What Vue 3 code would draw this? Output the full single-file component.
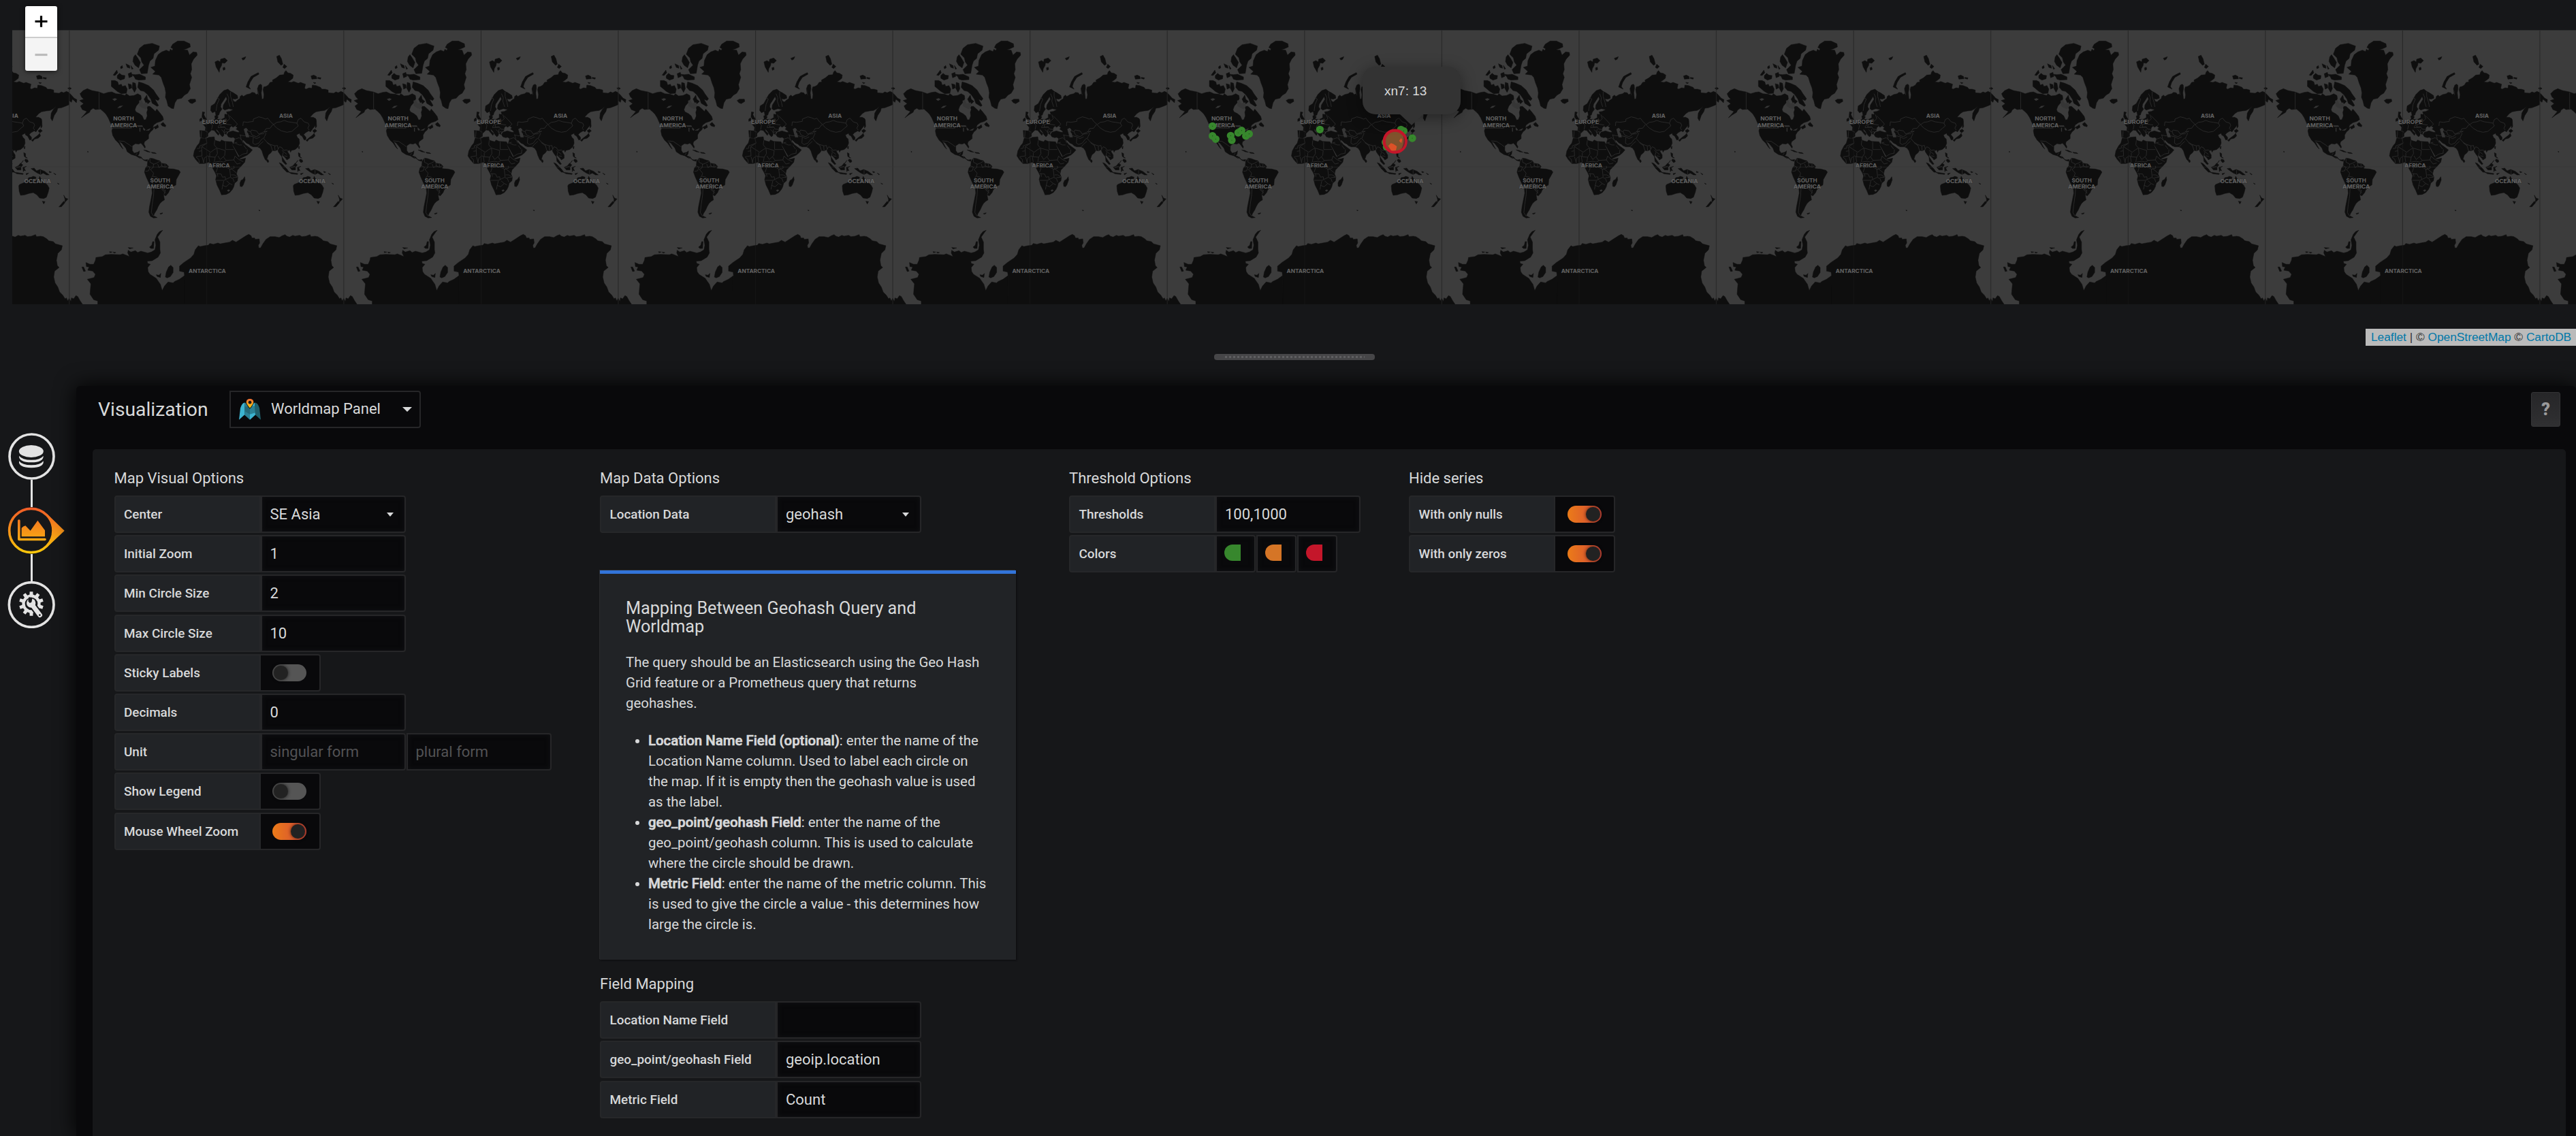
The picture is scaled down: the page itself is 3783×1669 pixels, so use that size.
<script setup>
const PERIOD = 1209.4
const copies = Array.from({ length: 10 }, (_, i) => ({ id: i, x: (i - 1) * PERIOD }))

const land = [
  // Eurasia
  'M164,302 L176,312 188,318 206,330 208,342 196,346 184,344 190,356 198,358 206,350 216,344 218,334 226,328 232,334 246,326 262,322 270,316 282,318 288,326 297,322 294,300 300,284 308,280 313,284 314,300 311,318 314,346 321,344 323,326 319,304 322,292 332,290 342,284 350,272 362,270 360,262 378,252 392,240 410,238 414,226 420,220 428,230 440,232 452,240 450,254 440,262 428,270 444,272 454,268 474,276 484,272 494,276 506,280 502,298 508,302 522,296 534,298 536,284 552,286 572,294 578,302 592,302 606,306 606,318 630,320 640,314 650,318 662,312 672,316 684,328 696,342 708,348 706,362 696,352 688,346 684,360 674,352 674,370 660,376 640,384 624,386 620,400 608,418 600,442 593,430 595,408 604,392 618,376 604,388 590,396 572,398 552,402 540,410 526,426 540,426 550,432 553,446 546,466 538,476 528,490 520,486 506,494 498,502 508,514 508,524 500,526 494,514 490,508 482,504 480,496 466,504 470,514 478,522 480,540 474,556 460,568 444,572 440,580 436,570 426,576 436,592 436,606 424,614 418,606 404,592 402,600 410,612 424,632 418,634 404,620 402,600 394,590 386,578 384,568 372,574 360,572 354,582 342,592 338,604 334,618 328,612 320,594 314,574 306,562 294,556 276,556 264,552 256,544 246,540 232,526 228,530 240,546 248,552 256,558 272,570 262,582 250,592 234,600 216,608 212,600 204,584 196,566 190,556 188,546 192,534 196,520 188,514 178,516 166,512 160,502 166,492 186,486 206,492 216,492 210,484 200,478 206,472 196,464 186,470 180,464 172,472 170,486 160,490 156,502 148,494 146,506 140,512 132,504 124,490 112,476 114,486 126,498 122,506 112,494 104,484 92,482 86,488 76,498 76,510 62,518 42,514 40,484 64,486 66,470 56,458 72,458 84,446 98,440 108,434 106,420 114,418 122,424 116,434 134,436 150,428 150,412 162,414 158,402 172,400 188,392 168,388 150,394 142,388 144,372 154,356 160,346 156,334 146,350 134,368 132,380 138,390 128,404 124,416 112,422 108,400 96,406 88,396 90,376 106,366 118,344 128,326 146,308z',
  'M52,402 L62,404 58,414 64,426 72,438 72,446 54,450 58,436 50,424z M40,434 L48,428 50,440 40,444z',
  // Africa
  'M44,518 L68,520 80,514 104,512 106,526 116,530 130,534 136,526 150,532 182,534 188,546 196,566 204,584 212,602 218,612 242,606 238,624 220,644 206,658 202,676 208,690 206,706 194,716 190,732 184,744 172,758 156,766 136,768 128,748 116,724 110,700 114,684 108,670 98,652 96,634 80,624 60,630 38,630 22,612 12,596 16,574 28,552 38,540z',
  'M238,688 L240,702 232,724 226,732 218,730 217,716 222,704 230,700z',
  // European and Siberian Arctic islands
  'M107,182 L120,176 130,182 132,170 150,165 162,176 150,188 138,186 136,198 128,212 126,228 118,214 112,204z M142,208 l8,-3 2,10 -8,4z M225,166 L243,159 238,170 230,174z',
  'M244,292 L252,270 266,246 284,236 298,229 301,236 276,250 262,272 256,290 264,302z',
  'M379,158 L391,152 400,168 406,192 398,197 384,182z M406,206 L412,192 424,202 414,211z M530,244 L542,240 554,246 556,256 534,258z M560,250 l14,2 -2,6 -12,-3z M540,272 l12,2 -6,4z M668,298 l8,-4 8,5 -8,5z',
  // East Asian islands
  'M548,430 l5,6 2,30 -5,8 -2,-16z M538,484 L548,478 556,486 546,494 540,490z M544,496 L548,508 538,518 522,522 514,532 508,528 522,516 538,504z M476,556 l4,-2 -2,12 -3,-4z M424,590 l4,4 -4,4z',
  'M474,582 L482,586 482,600 490,606 484,604 476,598z M482,610 L492,614 494,622 486,626 478,616z M472,616 l-10,14 8,-10z',
  'M390,626 L400,630 424,654 434,668 424,668 406,650z M432,668 L448,670 472,674 470,678 444,675z M436,646 L450,640 460,628 470,636 462,646 462,658 446,658z M470,646 L486,642 476,650 482,662 476,660 472,666z M506,652 L520,650 530,662 546,656 566,664 586,680 574,680 560,672 548,678 534,672 522,664z M484,674 l12,-2 -10,8z',
  'M336,612 l6,2 2,8 -4,4 -4,-6z M586,664 l10,4 -8,2z M606,672 l10,6 -3,1z M622,716 l8,4 -2,2z',
  // Oceania
  'M452,728 L456,722 476,714 488,706 496,692 508,690 516,686 528,690 526,700 538,708 544,686 552,700 564,712 578,724 586,738 582,756 574,778 562,784 544,782 532,768 516,758 496,762 478,768 460,770 454,752z M556,796 L568,798 562,808z M650,769 L658,782 669,786 660,796 654,800 656,788z M650,796 L656,802 640,820 629,821z',
  // North America
  'M722,322 L736,308 754,300 774,308 804,314 826,322 846,316 862,314 880,322 900,324 920,330 926,322 940,332 960,330 976,322 990,330 992,344 984,360 970,376 964,392 968,402 984,410 996,420 1004,438 1012,436 1018,420 1016,404 1020,392 1016,378 1030,378 1046,392 1054,400 1060,390 1072,404 1086,422 1090,436 1078,444 1060,450 1046,460 1042,472 1058,464 1064,458 1068,470 1054,478 1048,470 1042,482 1032,490 1024,504 1024,520 1006,534 1004,544 1010,556 1008,562 998,548 990,540 980,544 966,542 952,552 952,572 960,584 976,580 984,574 982,588 976,596 990,600 1000,612 1008,614 1020,612 1018,620 1004,616 992,606 984,606 968,596 948,590 930,578 924,562 906,540 894,532 904,552 912,566 904,558 892,540 878,526 866,506 862,486 866,472 854,446 846,428 836,412 826,402 812,390 790,392 780,386 768,394 764,404 744,416 728,428 744,410 752,400 732,392 724,376 738,366 720,352 738,346 728,336z',
  'M1078,456 L1088,448 1100,462 1098,468 1084,464z M1002,570 L1016,572 1032,580 1018,578z M1036,580 L1052,582 1058,586 1040,584z M755,576 l4,2 -3,2z',
  // Canadian Arctic
  'M860,264 L876,264 888,270 892,284 904,280 908,290 922,286 930,302 926,320 904,322 886,312 870,298 860,290z M980,270 L1000,276 1014,282 1024,286 1046,306 1056,322 1072,344 1066,352 1052,346 1068,374 1062,378 1040,364 1034,346 1020,326 1004,312 988,308 976,294z M934,278 L948,282 950,296 938,302z M954,272 l12,4 4,24 -8,16 -10,-18z M1004,346 L1016,328 1020,346 1032,356 1022,366 1012,362z',
  'M974,148 L984,122 1004,106 1040,100 1072,112 1068,130 1048,146 1044,166 1030,178 1024,196 1018,232 992,234 984,216 1004,196 994,182 990,164z M958,160 L966,150 976,164 988,184 980,208 964,196 955,180z M946,236 L966,238 984,236 1010,248 1010,260 980,262 966,258 960,246z M886,242 L896,232 906,240 920,242 918,256 900,262 886,254z M868,240 L884,218 888,230 876,242z M900,204 l8,-6 2,10 -8,4z M924,190 L940,198 942,210 930,206z M934,234 L948,228 952,246 938,252z M946,198 l10,14 -6,2z',
  // Greenland and Iceland
  'M1034,206 L1052,200 1054,176 1066,150 1082,138 1102,130 1116,136 1120,126 1128,132 1132,124 1122,118 1130,104 1152,90 1180,90 1206,102 1208,116 1190,124 1176,128 1196,130 1204,152 1220,138 1236,140 1238,152 1222,170 1212,190 1214,216 1208,234 1214,250 1204,282 1208,300 1196,320 1182,328 1170,342 1150,346 1140,362 1134,388 1124,386 1110,376 1104,352 1098,338 1100,318 1096,296 1088,276 1080,250 1070,240 1042,236 1054,224z M1198,352 L1208,346 1230,346 1232,356 1216,366 1206,362z',
  // South America
  'M1020,620 L1030,606 1044,608 1060,614 1074,618 1080,628 1102,632 1112,642 1108,652 1134,654 1158,660 1164,668 1154,686 1146,700 1144,724 1126,734 1116,748 1112,758 1100,772 1090,768 1094,790 1084,796 1074,806 1066,820 1060,834 1050,850 1046,860 1062,868 1046,870 1032,862 1025,844 1028,820 1034,790 1040,760 1038,736 1026,716 1014,690 1006,668 1010,650 1018,640z M1074,850 l12,-3 -2,4 -8,2z M300,835 l6,1 -3,3z',
  // Antarctica
  'M-27,1252 L-27,1124 -29,1108 -49,1104 -49,1082 -30,1066 0,1046 14,1030 20,1010 34,992 42,996 60,992 78,990 84,982 100,986 120,980 130,984 150,980 172,976 184,968 200,976 222,962 244,948 256,942 266,948 270,958 282,958 284,964 302,962 304,980 298,990 300,1002 308,1002 318,984 332,964 350,952 372,952 390,956 404,948 416,943 424,950 436,954 450,946 460,950 480,946 490,952 508,950 526,943 530,952 548,950 560,952 576,962 584,970 604,974 614,984 644,992 640,1010 624,1026 618,1056 622,1080 630,1088 610,1104 606,1130 612,1156 624,1174 632,1196 646,1210 656,1226 662,1222 668,1236 674,1224 682,1238 684,1222 694,1226 704,1212 712,1216 722,1234 734,1252z',
  'M800,1252 L800,1236 782,1230 766,1206 768,1180 770,1160 754,1140 770,1136 784,1132 790,1118 778,1104 756,1100 762,1086 750,1084 748,1066 766,1074 782,1074 790,1056 792,1044 820,1040 834,1032 860,1030 900,1032 910,1028 926,1034 940,1040 932,1024 934,1012 946,1020 966,1014 976,1022 990,1016 1020,1024 1036,1020 1052,1010 1056,990 1052,966 1062,942 1072,930 1086,924 1078,934 1064,954 1074,976 1074,1008 1076,1024 1066,1042 1040,1058 1018,1060 1020,1070 1032,1074 1020,1088 1022,1106 1030,1118 1058,1136 1066,1148 1076,1162 1084,1190 1094,1170 1110,1152 1132,1156 1138,1150 1160,1140 1182,1124 1184,1252z',
  'M1098,1130 L1102,1108 1112,1086 1122,1078 1132,1088 1132,1110 1120,1128 1106,1134z M1058,1120 L1070,1122 1078,1114 1076,1132 1062,1128z M730,1086 L738,1086 746,1104 738,1106z M1028,998 L1038,990 1042,974 1048,974 1046,1004 1034,1004z M934,1000 L956,1002 940,1006z M852,1018 l12,2 -10,3z M868,1020 l12,2 -8,3z',
]

const water = [
  'M234,478 L244,472 252,480 248,490 254,498 258,514 244,514 240,500z',
  'M864,346 L876,342 886,346 874,354z M886,386 L896,376 912,374 900,384z M320,490 L338,486 336,490z',
  'M972,462 L996,462 1000,468 978,468z M984,472 L988,472 988,490 984,488z M1000,470 L1010,480 1006,486 1000,480z M1010,484 L1034,474 1026,484z',
  'M982,352 L992,350 1000,366 1018,360 1020,380 1010,390 996,384 984,376z M182,544 L190,556 214,598 210,600 198,576z M160,748 l8,-4 6,4 -8,6z',
  'M296,300 l4,30 -2,-4z',
]

const borders = [
  'M230,464 L232,446 250,448 276,444 276,434 300,424 316,428 330,434 340,430 352,446 366,458 380,448 396,446 412,440 430,446 446,448 468,452 474,436 486,430 500,446 518,452 522,462 516,474 522,482',
  'M364,458 L380,474 400,486 424,492 446,488 462,474 474,464 468,452 M362,458 L350,474 332,476 324,490 300,500 290,486 268,482 264,490 240,480 M324,490 L332,498 326,510 322,520 336,536 352,546 372,552 382,550 386,568',
  'M264,490 L270,504 290,512 306,500 324,498 M250,506 L276,512 290,520 306,512 M218,502 L222,520 232,540 M250,506 L238,508 216,504 M276,514 L274,540 284,546 M284,546 L300,540 312,524 320,518 M296,556 L304,546 320,532 M352,546 L360,572 M336,538 L352,550 M370,552 L372,574 M384,568 L392,556 402,560 410,572 424,570 432,576 M402,572 L412,580 424,590 M408,580 L404,598 M412,596 L426,598',
  'M205,536 L190,540 M196,522 L214,516 224,526 M196,540 L214,548 226,548 M214,598 L230,588 250,584 M250,568 L248,584 M234,550 L246,566',
  'M114,338 L126,346 116,370 112,398 M160,322 L168,340 166,356 174,380 M176,314 L176,334 184,360 188,380 M130,432 L132,452 120,470 M84,446 L96,462 92,480 M154,430 L160,442 154,456 134,456 M166,414 L172,432 160,444 M172,420 L192,440 206,456 196,466 M154,456 L180,460 M120,472 L150,468 156,478 172,480 M64,486 L76,492 M48,486 L46,514 M134,456 L132,470 150,470 M136,480 L150,494 M150,478 L146,494 160,488',
  'M68,522 L72,540 40,552 40,562 28,564 M72,540 L48,556 50,596 24,600 M50,556 L88,580 104,568 116,562 152,572 M106,528 L104,548 116,562 M154,534 L154,568 190,568 M152,572 L150,594 144,600 156,616 190,614 196,596 M116,564 L118,586 108,602 84,600 84,582 M84,600 L74,596 60,606 56,626 M108,602 L104,622 96,630 M120,596 L130,612 144,600 M106,624 L130,620 146,624 158,616 M24,602 L36,612 38,628 M50,600 L58,628 M70,600 L70,626 M80,600 L84,624 M98,642 L120,642 132,626 M120,644 L112,668 M112,674 L134,676 140,690 152,688 154,700 176,690 172,654 158,646 134,644 M176,650 L202,672 M172,656 L192,650 190,640 M190,614 L204,632 220,628 M196,598 L212,612 232,622 M112,704 L146,704 156,700 M146,706 L140,732 138,744 M140,726 L156,732 172,718 158,706 M172,718 L184,724 M176,692 L186,696 192,712 M186,692 L206,690',
  'M806,316 L806,390 M862,474 L950,474 M892,530 L916,532 940,548 950,556 M968,592 L974,584 M984,604 L990,598 M1030,606 L1030,624 1046,632 1044,648 1032,656 1046,672 1042,686 1060,690 1070,700 1072,716 1086,720 1090,734 1082,744 1100,760 M1044,634 L1060,628 1074,620 M1064,632 L1070,648 1080,640 1098,646 1106,640 M1080,628 L1084,644 M1096,632 L1096,646 M1018,640 L1030,646 1024,662 1010,664 M1040,686 L1034,700 1044,724 1056,740 1076,736 M1048,736 L1046,770 1040,810 1036,846 1046,862 M1086,744 L1098,748 1092,766',
  'M548,658 L548,678 M442,648 L460,642 M36,576 L48,574 M208,690 L192,680 178,680 M120,688 L118,674',
]

const labels = [
  { t: 'NORTH', x: 914, y: 441, w: 91 },
  { t: 'AMERICA', x: 914, y: 469, w: 119 },
  { t: 'SOUTH', x: 1075, y: 712, w: 88 },
  { t: 'AMERICA', x: 1075, y: 741, w: 121 },
  { t: 'EUROPE', x: 104, y: 455, w: 107 },
  { t: 'ASIA', x: 420, y: 427, w: 60 },
  { t: 'AFRICA', x: 125, y: 648, w: 95 },
  { t: 'OCEANIA', x: 535, y: 717, w: 118 },
  { t: 'ANTARCTICA', x: 73, y: 1113, w: 164 },
]

const markers = [
  [242, 465], [242, 508], [256, 522], [322, 507], [327, 527], [355, 494], [370, 484],
  [389, 508], [403, 499], [715, 480], [1072, 480], [1084, 486], [1122, 518], [1004, 536], [1009, 556],
]

const visual = [
  { label: 'Center', value: 'SE Asia', select: true },
  { label: 'Initial Zoom', value: '1' },
  { label: 'Min Circle Size', value: '2' },
  { label: 'Max Circle Size', value: '10' },
  { label: 'Sticky Labels', toggle: true, on: false },
  { label: 'Decimals', value: '0' },
  { label: 'Unit', placeholders: ['singular form', 'plural form'] },
  { label: 'Show Legend', toggle: true, on: false },
  { label: 'Mouse Wheel Zoom', toggle: true, on: true },
]
const mapping = [
  { label: 'Location Name Field', value: '' },
  { label: 'geo_point/geohash Field', value: 'geoip.location' },
  { label: 'Metric Field', value: 'Count' },
]
const hide = ['With only nulls', 'With only zeros']
const colors = ['#37872d', '#d57526', '#c4162a']

const gear = (() => {
  const n = 10
  const pts = []
  for (let i = 0; i < n; i++) {
    const a = (i / n) * Math.PI * 2 - Math.PI / 2
    for (const [d, r] of [[-0.19, 41], [-0.13, 54], [0.13, 54], [0.19, 41]]) {
      pts.push(`${(138 + r * Math.cos(a + d)).toFixed(1)},${(99 + r * Math.sin(a + d)).toFixed(1)}`)
    }
  }
  return `M${pts.join('L')}z`
})()
</script>

<template>
  <div class="page">
    <section class="preview">
      <div class="map">
        <svg class="tiles" viewBox="-786 41 11295 1209.4" preserveAspectRatio="none">
          <defs>
            <g id="world">
              <path v-for="(d, i) in land" :key="'l' + i" :d="d" class="land" />
              <path v-for="(d, i) in borders" :key="'b' + i" :d="d" class="border" />
              <path v-for="(d, i) in water" :key="'w' + i" :d="d" class="water" />
              <path d="M70,41V1250" class="meridian" />
              <path d="M674.5,41V1250" class="antimeridian" />
              <text
                v-for="(l, i) in labels"
                :key="'t' + i"
                :x="l.x"
                :y="l.y"
                :textLength="l.w"
                lengthAdjust="spacingAndGlyphs"
                class="continent"
              >{{ l.t }}</text>
            </g>
            <clipPath id="red-clip"><circle cx="1046" cy="532" r="44" /></clipPath>
          </defs>
          <use v-for="c in copies" :key="c.id" href="#world" :x="c.x" />
          <path d="M-786,645H10509" class="equator" />
          <path d="M-786,42H10509" class="top-edge" />
          <g transform="translate(4260 0)">
            <g v-for="(m, i) in markers" :key="'m' + i">
              <circle :cx="m[0]" :cy="m[1]" r="10" class="dot" />
              <circle :cx="m[0]" :cy="m[1]" r="1.8" class="dot-core" />
            </g>
            <circle cx="1046" cy="532" r="48" class="hot" />
            <g clip-path="url(#red-clip)">
              <path d="M1078,488 Q1094,532 1070,574 L1100,570 1100,500z" fill="#6d2a30" />
              <path d="M1016,552 L1028,540 1040,544 1054,554 1050,572 1030,574z M1064,530 L1072,518 1078,524 1074,540z" fill="#dc5127" />
            </g>
          </g>
        </svg>
        <div class="popup"><span>xn7: 13</span></div>
        <div class="zoom">
          <button><svg viewBox="0 0 20 20"><path d="M0.5,10H19.5M10,1.2V18.8" /></svg></button>
          <button class="off"><svg viewBox="0 0 20 20"><path d="M0.5,10H19.5" /></svg></button>
        </div>
        <div class="attribution"><a>Leaflet</a> | © <a>OpenStreetMap</a> © <a>CartoDB</a></div>
      </div>
      <div class="resizer"><i></i></div>
    </section>

    <section class="editor">
      <nav class="tabs">
        <svg viewBox="0 0 300 207">
          <circle cx="139.500" cy="103.500" r="97.500" class="ring" />
          <ellipse cx="137.500" cy="81" rx="54" ry="27" fill="#e3e3e3" />
          <path d="M84,101 Q98,119 138,119 Q178,119 191,101 Q193,129 138,130 Q82,129 84,101z" fill="#e3e3e3" />
          <path d="M84,124 Q98,142 138,142 Q178,142 191,124 Q195,153 138,154 Q80,153 84,124z" fill="#e3e3e3" />
        </svg>
        <span class="link"></span>
        <svg viewBox="0 0 300 207">
          <defs>
            <linearGradient id="sun" x1="0" y1="0" x2="0" y2="207" gradientUnits="userSpaceOnUse">
              <stop offset="0" stop-color="#f05a28" />
              <stop offset="1" stop-color="#fbca0a" />
            </linearGradient>
          </defs>
          <path d="M205,28 L284,104 205,179 Q232,150 232,104 Q232,58 205,28z" fill="url(#sun)" />
          <circle cx="137.500" cy="103.500" r="96.500" fill="none" stroke="url(#sun)" stroke-width="11" />
          <path d="M78,60 a5.500,5.500 0 0 1 11,0 V137 H198 a5.500,5.500 0 0 1 0,11 H84 q-6,0 -6,-6z" fill="url(#sun)" />
          <path d="M95,130 V92 Q102,84 112,82 L134,104 166,59 198,103 V130z" fill="url(#sun)" />
        </svg>
        <span class="link"></span>
        <svg viewBox="0 0 300 207">
          <circle cx="138.500" cy="103.500" r="98.500" class="ring" />
          <path :d="gear" fill="#e3e3e3" />
          <circle cx="138" cy="99" r="28" fill="#161719" />
          <path d="M142,104 L177,151" stroke="#161719" stroke-width="32" stroke-linecap="round" />
          <path d="M142,104 L176,149" stroke="#e3e3e3" stroke-width="20" stroke-linecap="round" />
          <circle cx="137" cy="96" r="20" fill="#e3e3e3" />
          <path d="M127,70 L143,72 139,92 131,96 124,88z" fill="#161719" />
          <circle cx="175" cy="149" r="4" fill="#161719" />
        </svg>
      </nav>

      <div class="panel">
        <header>
          <h1>Visualization</h1>
          <div class="picker">
            <svg class="logo" viewBox="0 0 96 92">
              <path d="M0,92 L6,40 Q14,16 26,16 L24,70z" fill="#3cb4d0" />
              <path d="M26,16 L36,22 48,40 48,92 24,70z" fill="#2a7f93" />
              <path d="M48,40 L60,22 70,16 72,70 48,92z" fill="#3cb4d0" />
              <path d="M70,16 Q84,18 90,40 L96,92 72,70z" fill="#1f5f6b" />
              <path d="M26,34 L70,30 72,60 48,68 28,56z" fill="#1d5763" opacity=".55" />
              <path d="M48,44 Q30,24 30,14 A18,17 0 0 1 66,14 Q66,24 48,44z" fill="#09090b" />
              <path d="M48,40 Q32,22 32,14 A16,15 0 0 1 64,14 Q64,22 48,40z" fill="url(#pin)" />
              <circle cx="48" cy="15" r="7" fill="#1a1a1c" />
              <defs>
                <linearGradient id="pin" x1="0" y1="0" x2="0" y2="1">
                  <stop offset="0" stop-color="#ee6a38" />
                  <stop offset="1" stop-color="#fcd00b" />
                </linearGradient>
              </defs>
            </svg>
            <span>Worldmap Panel</span>
            <i class="caret big"></i>
          </div>
          <button class="help">?</button>
        </header>

        <div class="content">
          <div class="col c1">
            <h5>Map Visual Options</h5>
            <div v-for="r in visual" :key="r.label" class="row">
              <label>{{ r.label }}</label>
              <div v-if="r.toggle" class="switch"><b :class="{ on: r.on }"></b></div>
              <template v-else-if="r.placeholders">
                <div v-for="p in r.placeholders" :key="p" class="input ghost">{{ p }}</div>
              </template>
              <div v-else class="input">{{ r.value }}<i v-if="r.select" class="caret"></i></div>
            </div>
          </div>

          <div class="col c2">
            <h5>Map Data Options</h5>
            <div class="row">
              <label>Location Data</label>
              <div class="input">geohash<i class="caret"></i></div>
            </div>
            <div class="info">
              <h4>Mapping Between Geohash Query and Worldmap</h4>
              <p>The query should be an Elasticsearch using the Geo Hash Grid feature or a Prometheus query that returns geohashes.</p>
              <ul>
                <li><strong>Location Name Field (optional)</strong>: enter the name of the Location Name column. Used to label each circle on the map. If it is empty then the geohash value is used as the label.</li>
                <li><strong>geo_point/geohash Field</strong>: enter the name of the geo_point/geohash column. This is used to calculate where the circle should be drawn.</li>
                <li><strong>Metric Field</strong>: enter the name of the metric column. This is used to give the circle a value - this determines how large the circle is.</li>
              </ul>
            </div>
            <h5 class="second">Field Mapping</h5>
            <div v-for="r in mapping" :key="r.label" class="row">
              <label>{{ r.label }}</label>
              <div class="input">{{ r.value }}</div>
            </div>
          </div>

          <div class="col c3">
            <h5>Threshold Options</h5>
            <div class="row">
              <label>Thresholds</label>
              <div class="input">100,1000</div>
            </div>
            <div class="row">
              <label>Colors</label>
              <div v-for="c in colors" :key="c" class="input swatch"><s :style="{ background: c }"></s></div>
            </div>
          </div>

          <div class="col c4">
            <h5>Hide series</h5>
            <div v-for="h in hide" :key="h" class="row">
              <label>{{ h }}</label>
              <div class="switch"><b class="on"></b></div>
            </div>
          </div>
        </div>
      </div>
    </section>
  </div>
</template>

<style>
html, body { margin: 0; background: #161719; overflow: hidden; }
</style>

<style scoped>
* { box-sizing: border-box; }
.page {
  width: 3783px; height: 1669px; overflow: hidden;
  display: flex; flex-direction: column;
  background: #161719; color: #d8d9da;
  font-family: Roboto, "Liberation Sans", sans-serif;
}
.preview { height: 567px; flex: none; }
.map { position: relative; height: 508px; padding: 43.5px 0 0 18px; }
.tiles { display: block; width: 3765px; height: 403.1px; background: #3c3c3c; overflow: hidden; }
.land { fill: #0e0e0e; stroke: #0e0e0e; stroke-width: 1.5; stroke-linejoin: round; }
.border { fill: none; stroke: #303030; stroke-width: 2.4; stroke-linejoin: round; }
.water { fill: #363636; }
.meridian { stroke: #1c1c1c; stroke-width: 2.4; opacity: .8; }
.antimeridian { stroke: #262626; stroke-width: 4; opacity: .7; }
.equator { stroke: #363636; stroke-width: 2; opacity: .7; }
.top-edge { stroke: #2b2c2d; stroke-width: 3; }
.continent {
  font-family: Inter, "Open Sans", sans-serif; font-weight: 700; font-size: 24px;
  fill: #626262; text-anchor: middle;
  paint-order: stroke; stroke: rgba(24, 24, 24, .35); stroke-width: 3;
}
.dot { fill: #37872d; stroke: #37872d; stroke-width: 14; }
.dot-core { fill: #1e4a1a; }
.hot { fill: #80522c; stroke: #c4162a; stroke-width: 13; }

.popup {
  position: absolute; left: 2001px; top: 98px; width: 144px; height: 70px;
  padding-left: 32px; display: flex; align-items: center;
  background: #333; border-radius: 19px; box-shadow: 0 5px 22px rgba(0, 0, 0, .4);
  font: 19px/27px "Liberation Sans", Arial, sans-serif;
}
.popup::after {
  content: ""; position: absolute; left: 55px; top: 70px;
  border: solid transparent; border-width: 16px 17px 0; border-top-color: #333;
}
.zoom {
  position: absolute; left: 37px; top: 9px; width: 47px;
  border-radius: 3px; overflow: visible; box-shadow: 0 1px 7px rgba(0, 0, 0, .65);
}
.zoom button {
  display: flex; align-items: center; justify-content: center;
  width: 47px; height: 47px; padding: 0; border: 0; border-bottom: 2px solid #ccc;
  background: #fff; border-radius: 3px 3px 0 0;
}
.zoom .off { height: 48px; border: 0; background: #f4f4f4; border-radius: 0 0 3px 3px; }
.zoom svg { width: 19px; height: 19px; }
.zoom path { stroke: #000; stroke-width: 3.4; }
.zoom .off path { stroke: #bbb; }
.attribution {
  position: absolute; right: 0; bottom: 0; width: 309px; height: 25px; padding-left: 8px;
  background: #bbb; color: #333; white-space: nowrap;
  font: 17.3px/25px "Liberation Sans", Arial, sans-serif;
}
.attribution a { color: #0078a8; }
.resizer { display: flex; justify-content: center; padding-top: 12px; padding-left: 19px; }
.resizer i {
  width: 236px; height: 9px; padding: 3px 15px 3px 16px; border-radius: 4px; background: #464648;
}
.resizer i::before {
  content: ""; display: block; height: 3px;
  background: repeating-linear-gradient(90deg, #5f5f61 0 3px, transparent 3px 6px);
}

.editor { flex: 1; display: flex; }
.tabs { width: 112px; flex: none; padding-top: 69px; display: flex; flex-direction: column; }
.tabs svg { display: block; width: 100px; height: 69px; flex: none; }
.ring { fill: none; stroke: #e3e3e3; stroke-width: 11; }
.link { width: 3px; height: 40px; margin-left: 45px; background: #e3e3e3; flex: none; }
.panel {
  flex: 1; background: #09090b; border-radius: 6px 6px 0 0; box-shadow: 0 0 31px #000;
  display: flex; flex-direction: column;
}
header { height: 93px; flex: none; display: flex; padding: 7px 23px 0 32px; }
h1 { margin: 0; width: 193px; font-weight: 400; font-size: 28.3px; line-height: 55px; }
.picker {
  width: 281px; height: 55px; border: 2px solid #262628; border-radius: 0 4px 4px 0;
  display: flex; align-items: center; font-size: 22px; padding-left: 12px;
}
.picker span { margin-left: 15px; width: 176px; white-space: nowrap; position: relative; top: -1px; }
.logo { width: 32px; height: 31px; }
.caret { border: solid transparent; border-width: 6px 5.500px 0; border-top-color: #d8d9da; margin-left: auto; }
.caret.big { border-width: 7px 7px 0; margin-left: 17px; }
.help {
  margin-left: auto; margin-top: 2px; width: 43px; height: 51px; border: 1px solid #343436;
  border-radius: 3px; background: linear-gradient(#262628, #303032); padding: 0;
  color: #9a9a9b; font: 900 25px Roboto, sans-serif;
}
.content {
  flex: 1; margin: 0 15px 0 24px; padding: 25px 0 0 31.500px; display: flex; align-items: flex-start;
  background: #161719; border-radius: 5px 5px 0 0;
}
.col { flex: none; }
.c1 { width: 713.500px; }
.c2 { width: 689px; }
.c3 { width: 499px; }
h5 { margin: 0; height: 43px; font-weight: 400; font-size: 22px; line-height: 36px; }
h5.second { margin-top: 18px; }
.row { display: flex; height: 55px; margin-bottom: 3.200px; }
label {
  width: 215px; height: 55px; flex: none; padding-left: 12.500px; display: flex; align-items: center;
  background: #212326; border: 2px solid #262729; border-radius: 4px 0 0 4px;
  font-size: 18.900px; font-weight: 500; white-space: nowrap;
}
.c2 label { width: 259px; }
.input {
  width: 213px; height: 55px; padding: 0 16px 0 12px; display: flex; align-items: center;
  border: 2px solid #262628; border-radius: 0 4px 4px 0; background: #09090b;
  box-shadow: inset 0 0 7px #121315; font-size: 22px; white-space: nowrap;
}
.ghost { color: #525254; }
.ghost + .ghost { margin-left: 1px; }
.switch {
  width: 88px; height: 55px; display: flex; align-items: center; padding-left: 17.500px;
  border: 2px solid #262628; border-left: 0; border-radius: 0 4px 4px 0; background: #09090b;
}
.switch b {
  width: 50px; height: 25px; padding: 2px; border-radius: 13px; background: #555;
  display: flex;
}
.switch b::before {
  content: ""; width: 21px; height: 21px; border-radius: 50%; background: #222;
  box-shadow: 0 0 5px rgba(0, 0, 0, .7);
}
.switch .on { background: linear-gradient(90deg, #eb7b18, #d44a3a); justify-content: flex-end; }
.swatch { width: 59px; padding: 0 0 0 11px; margin-right: 1px; align-items: flex-start; }
.swatch s { width: 24px; height: 24px; margin-top: 12px; border-radius: 12px 0 0 12px; }
.info {
  width: 611px; height: 572.500px; margin: 54.700px 0 0 0; padding: 37px 38px 0;
  background: #212326; border-top: 5px solid #3274d9;
  box-shadow: -1px -1px 0 #2a2b2d, 1px 1px 2px #0c0c0e; font-size: 20.400px; line-height: 30px;
}
.info h4 { margin: 0; font-weight: 400; font-size: 25.200px; line-height: 27px; }
.info p { margin: 24px 0 0; }
.info ul { margin: 25px 0 0; padding-left: 33px; }
.info strong { font-weight: 500; -webkit-text-stroke: .6px #d8d9da; }
</style>
